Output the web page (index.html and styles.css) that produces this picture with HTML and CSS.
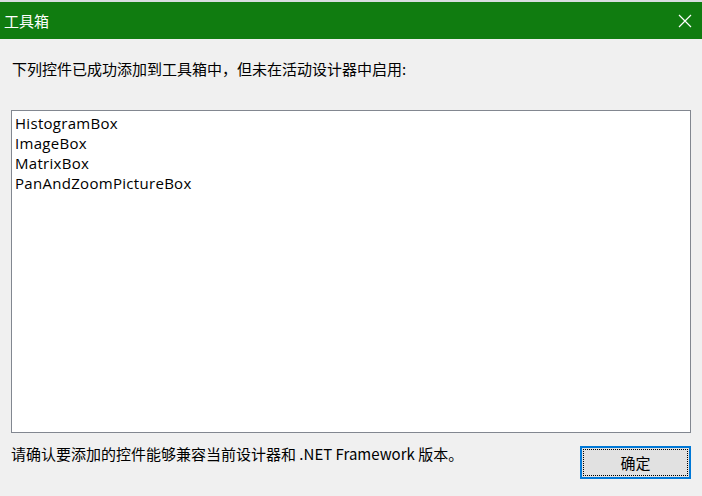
FILE: index.html
```html
<!DOCTYPE html>
<html lang="zh-CN">
<head>
<meta charset="utf-8">
<title>工具箱</title>
<link rel="stylesheet" href="styles.css">
</head>
<body>
<div class="backdrop"></div>
<div class="dialog">
  <div class="titlebar">
    <span class="title">工具箱</span>
    <svg class="close" width="14" height="14" viewBox="0 0 14 14"><path d="M1 1 L13 13 M13 1 L1 13" stroke="#ffffff" stroke-width="1.2" fill="none"/></svg>
  </div>
  <div class="content">
    <p class="label">下列控件已成功添加到工具箱中，但未在活动设计器中启用:</p>
    <div class="listbox">
      <div class="item">HistogramBox</div>
      <div class="item">ImageBox</div>
      <div class="item">MatrixBox</div>
      <div class="item">PanAndZoomPictureBox</div>
    </div>
    <div class="footer">
      <p class="note">请确认要添加的控件能够兼容当前设计器和 .NET Framework 版本。</p>
      <button class="ok"><span class="focus">确定</span></button>
    </div>
  </div>
</div>
</body>
</html>
```
FILE: styles.css
```css
html, body {
  margin: 0;
  padding: 0;
  background: #f0f0f0;
  width: 702px;
  height: 496px;
  overflow: hidden;
  font-family: "Noto Sans CJK SC", "Noto Sans", sans-serif;
}
.backdrop {
  height: 2px;
  background: #d8dde0;
}
.dialog {
  display: flex;
  flex-direction: column;
}
.titlebar {
  height: 37px;
  background: #107c10;
  display: flex;
  align-items: center;
  justify-content: space-between;
  padding: 0 10px 0 4px;
}
.title {
  color: #ffffff;
  font-size: 15px;
  line-height: 37px;
}
.close {
  display: block;
}
.content {
  padding: 0 11px 0 11px;
  display: flex;
  flex-direction: column;
}
.label {
  margin: 20px 0 0 1px;
  font-size: 15px;
  line-height: 20px;
  color: #000;
  height: 20px;
}
.listbox {
  margin-top: 31px;
  height: 319px;
  background: #ffffff;
  border: 1px solid #828790;
  padding: 2px 0 0 3px;
  box-sizing: content-box;
  width: 675px;
}
.item {
  font-family: "Open Sans", "Noto Sans", sans-serif;
  font-size: 15px;
  letter-spacing: 0.3px;
  line-height: 20px;
  color: #000;
}
.footer {
  display: flex;
  justify-content: space-between;
  align-items: flex-start;
  margin-top: 13px;
}
.note {
  margin: -2px 0 0 0;
  font-size: 15px;
  line-height: 20px;
  color: #000;
}
.ok {
  width: 111px;
  height: 33px;
  background: #e1e1e1;
  border: 2px solid #0078d7;
  padding: 1px;
  margin: 0;
  font-family: "Noto Sans CJK SC", sans-serif;
  font-size: 15px;
  color: #000;
  display: flex;
}
.focus {
  flex: 1;
  border: 1px dotted #000;
  display: flex;
  align-items: center;
  justify-content: center;
  line-height: 1;
}
```
